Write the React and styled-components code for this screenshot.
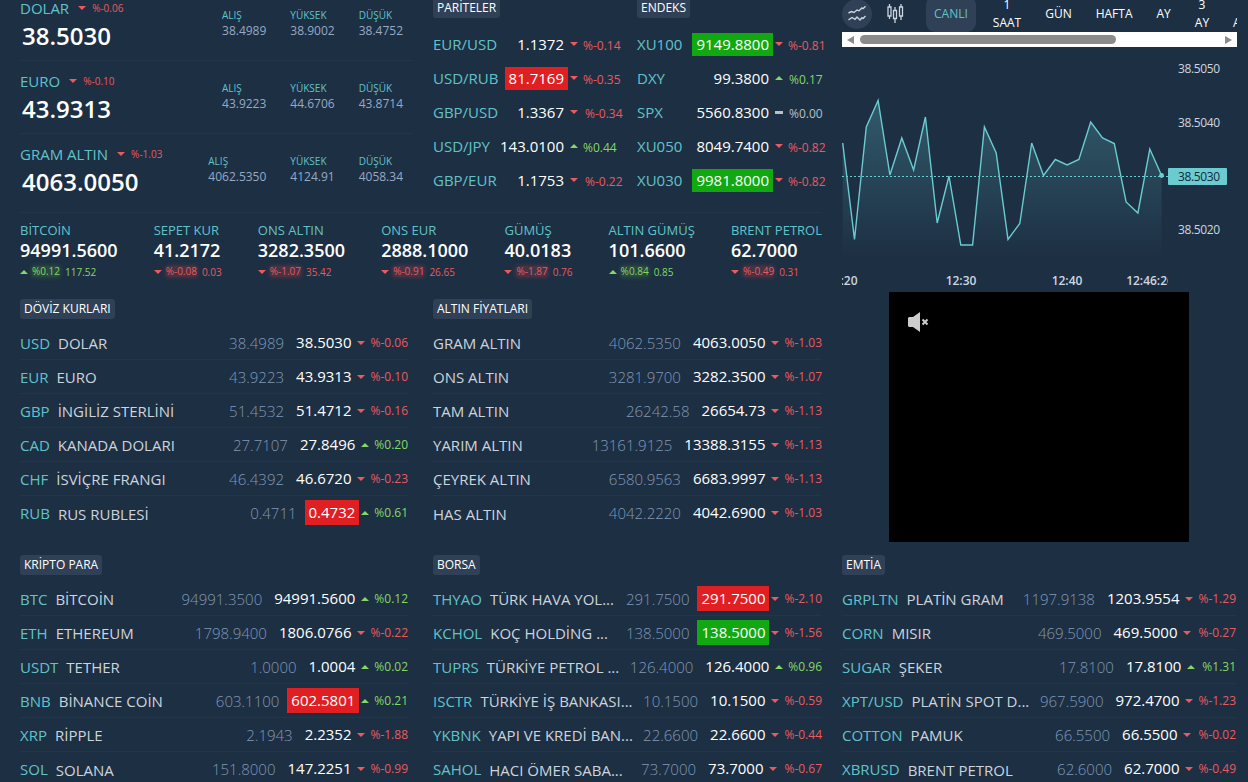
import React from 'react'
import styled, { ThemeProvider, createGlobalStyle } from 'styled-components'

const theme = {
  color: {
    bg: '#1d2f43',
    panel: '#2f4057',
    line: '#22354a',
    cyan: '#61c3ca',
    white: '#ffffff',
    name: '#cdd4dd',
    muted: '#8097b5',
    stat: '#97a9c4',
    up: '#85d863',
    down: '#ea5a5f',
    flat: '#b9c0c8',
    red: '#e01f23',
    green: '#12a812',
  },
}

const GlobalStyle = createGlobalStyle`
  * {
    box-sizing: border-box;
  }
  body {
    margin: 0;
    overflow: hidden;
    background: ${theme.color.bg};
    font-family: 'Open Sans', 'Noto Sans', sans-serif;
    color: ${theme.color.white};
  }
  button {
    border: 0;
    padding: 0;
    background: none;
    color: inherit;
    font: inherit;
  }
`

const StylePage = styled.div`
  display: grid;
  grid-template-columns: 802px 395px;
  column-gap: 20px;
  height: 782px;
  padding-left: 20px;
  overflow: hidden;
`

const StyleMain = styled.div`
  min-width: 0;
`

const StyleTop = styled.div`
  display: flex;
  height: 225px;
  margin-top: -12px;
  border-bottom: 1px solid ${({ theme }) => theme.color.line};
  .cards {
    flex-shrink: 0;
    width: 393px;
    margin-right: 20px;
  }
  .tables {
    display: flex;
    flex-shrink: 0;
    gap: 16px;
    padding-top: 10px;
  }
`

const StyleCard = styled.div`
  display: flex;
  justify-content: space-between;
  height: 73px;
  padding: 9px 10px 0 0;
  border-bottom: 1px solid ${({ theme, $last }) => ($last ? 'transparent' : theme.color.line)};
  .head {
    display: flex;
    align-items: center;
    height: 22px;
    font-size: 15px;
    color: ${({ theme }) => theme.color.cyan};
  }
  .price {
    padding-left: 2px;
    font-size: 24px;
    line-height: 34px;
    font-weight: 600;
  }
  .stats {
    display: flex;
    gap: 24px;
    padding-top: 11px;
    font-size: 12px;
    line-height: 15px;
    color: ${({ theme }) => theme.color.stat};
    b {
      display: block;
      font-size: 10px;
      line-height: 15px;
      font-weight: 400;
      color: ${({ theme }) => theme.color.cyan};
    }
  }
`

const Arrow = styled.i`
  flex-shrink: 0;
  width: ${({ $dir }) => ($dir === 'flat' ? '8px' : '0')};
  height: ${({ $dir }) => ($dir === 'flat' ? '3px' : '0')};
  margin-left: ${({ $gap = 0 }) => $gap}px;
  background: ${({ theme, $dir }) => ($dir === 'flat' ? theme.color.flat : 'none')};
  border-style: solid;
  border-color: transparent;
  border-width: ${({ $dir }) => ({ up: '0 4px 4px', down: '4px 4px 0', flat: '0' })[$dir]};
  border-bottom-color: ${({ theme, $dir }) => ($dir === 'up' ? theme.color.up : 'transparent')};
  border-top-color: ${({ theme, $dir }) => ($dir === 'down' ? theme.color.down : 'transparent')};
`

const Change = styled.span`
  flex-shrink: 0;
  font-size: ${({ $size = 12 }) => $size}px;
  color: ${({ theme, $dir }) => theme.color[$dir]};
  margin-left: ${({ $gap = 5 }) => $gap}px;
`

const Badge = styled.h2`
  display: inline-block;
  height: 20px;
  margin: 0;
  padding: 0 4px;
  border-radius: 3px;
  background: ${({ theme }) => theme.color.panel};
  font-size: 12px;
  line-height: 20px;
  font-weight: 400;
  vertical-align: top;
`

const StyleQuotes = styled.section`
  width: ${({ $width }) => $width}px;
  .list {
    padding-top: 7px;
  }
`

const StyleQuote = styled.div`
  display: flex;
  align-items: center;
  height: 34px;
  font-size: 15px;
  .code {
    flex-grow: 1;
    color: ${({ theme }) => theme.color.cyan};
  }
  .change {
    flex-shrink: 0;
    width: 43px;
    white-space: nowrap;
  }
`

const Price = styled.span`
  flex-shrink: 0;
  height: ${({ $tall }) => ($tall ? 25 : 23)}px;
  padding: 0 4px;
  margin-right: 2px;
  line-height: ${({ $tall }) => ($tall ? 24 : 22)}px;
  font-weight: 500;
  background: ${({ theme, $flash }) => ($flash ? theme.color[$flash] : 'transparent')};
`

const StyleStrip = styled.div`
  display: flex;
  justify-content: space-between;
  height: 86px;
  padding-top: 7px;
  .label {
    font-size: 13px;
    line-height: 20px;
    color: ${({ theme }) => theme.color.cyan};
  }
  .value {
    font-size: 18px;
    line-height: 20px;
    font-weight: 600;
  }
  .diff {
    display: flex;
    align-items: center;
    height: 23px;
  }
`

const Glow = styled(Change)`
  line-height: 11px;
  border-radius: 3px;
  background: ${({ $dir }) => ($dir === 'up' ? 'rgba(110, 200, 60, 0.16)' : 'rgba(234, 70, 75, 0.2)')};
  box-shadow: 0 0 4px 1px ${({ $dir }) => ($dir === 'up' ? 'rgba(110, 200, 60, 0.16)' : 'rgba(234, 70, 75, 0.2)')};
`

const StyleColumns = styled.div`
  display: flex;
  gap: 25px;
  height: 256px;
`

const StyleTable = styled.section`
  width: ${({ $width }) => $width}px;
  .list {
    padding-top: 5px;
  }
`

const StyleRow = styled.div`
  display: flex;
  align-items: center;
  height: 34px;
  border-bottom: 1px solid ${({ theme, $last }) => ($last ? 'transparent' : theme.color.line)};
  font-size: 15px;
  white-space: nowrap;
  .code {
    margin-right: 8px;
    color: ${({ theme }) => theme.color.cyan};
  }
  .name {
    flex-grow: 1;
    padding-top: ${({ $last }) => ($last ? 2 : 0)}px;
    color: ${({ theme }) => theme.color.name};
  }
  .prev {
    margin-right: 8px;
    font-weight: 300;
    color: ${({ theme }) => theme.color.muted};
  }
`

const StyleSide = styled.aside`
  display: flex;
  flex-direction: column;
`

const StyleToolbar = styled.div`
  display: flex;
  align-items: center;
  gap: 8px;
  height: 36px;
  margin-top: -4px;
  overflow: hidden;
`

const IconButton = styled.button`
  flex-shrink: 0;
  width: 30px;
  height: 30px;
  border-radius: 50%;
  background: ${({ theme, $active }) => ($active ? theme.color.panel : 'transparent')};
  svg {
    display: block;
    margin: 5px;
  }
`

const RangeButton = styled.button`
  flex-shrink: 0;
  height: 36px;
  padding: 0 8px;
  margin: ${({ $active }) => ($active ? '0 1px 0 8px' : 0)};
  border-radius: 9px;
  background: ${({ theme, $active }) => ($active ? theme.color.panel : 'transparent')};
  color: ${({ theme, $active }) => ($active ? theme.color.cyan : theme.color.white)};
  font-size: 12px;
  line-height: 18px;
  white-space: pre-line;
`

const StyleScrollbar = styled.div`
  display: flex;
  align-items: center;
  height: 15px;
  padding: 0 5px;
  background: #fff;
  i {
    border: solid transparent;
    border-width: 4.5px 7px 4.5px 0;
    border-right-color: #8b8b8b;
    &:last-child {
      border-width: 4.5px 0 4.5px 7px;
      border-left-color: #8b8b8b;
      margin-left: auto;
    }
  }
  span {
    width: 256px;
    height: 9px;
    margin-left: 6px;
    border-radius: 5px;
    background: #8b8b8b;
  }
`

const StyleChart = styled.div`
  display: grid;
  grid-template-columns: 326px 69px;
  height: 245px;
  font-size: 12px;
  font-weight: 600;
  color: #ced6e0;
  svg {
    display: block;
  }
`

const Video = styled.div`
  width: 300px;
  height: 250px;
  margin: 0 auto 13px 47px;
  padding: 20px 19px;
  background: #000;
  svg {
    display: block;
  }
`

// [label, dir, change, price, alis, yuksek, dusuk]
const cards = [
  ['DOLAR', 'down', '%-0.06', '38.5030', '38.4989', '38.9002', '38.4752'],
  ['EURO', 'down', '%-0.10', '43.9313', '43.9223', '44.6706', '43.8714'],
  ['GRAM ALTIN', 'down', '%-1.03', '4063.0050', '4062.5350', '4124.91', '4058.34'],
]

const parities = [
  { code: 'EUR/USD', price: '1.1372', change: '%-0.14' },
  { code: 'USD/RUB', price: '81.7169', change: '%-0.35', flash: 'red' },
  { code: 'GBP/USD', price: '1.3367', change: '%-0.34', gap: 7 },
  { code: 'USD/JPY', price: '143.0100', change: '%0.44', dir: 'up' },
  { code: 'GBP/EUR', price: '1.1753', change: '%-0.22', gap: 7 },
]

const indexes = [
  { code: 'XU100', price: '9149.8800', change: '%-0.81', flash: 'green' },
  { code: 'DXY', price: '99.3800', change: '%0.17', dir: 'up', gap: 6 },
  { code: 'SPX', price: '5560.8300', change: '%0.00', dir: 'flat', gap: 6 },
  { code: 'XU050', price: '8049.7400', change: '%-0.82' },
  { code: 'XU030', price: '9981.8000', change: '%-0.82', flash: 'green' },
]

const strip = [
  ['BİTCOİN', '94991.5600', 'up', '%0.12', '117.52'],
  ['SEPET KUR', '41.2172', 'down', '%-0.08', '0.03'],
  ['ONS ALTIN', '3282.3500', 'down', '%-1.07', '35.42'],
  ['ONS EUR', '2888.1000', 'down', '%-0.91', '26.65'],
  ['GÜMÜŞ', '40.0183', 'down', '%-1.87', '0.76'],
  ['ALTIN GÜMÜŞ', '101.6600', 'up', '%0.84', '0.85'],
  ['BRENT PETROL', '62.7000', 'down', '%-0.49', '0.31'],
]

const currencies = [
  { code: 'USD', name: 'DOLAR', prev: '38.4989', price: '38.5030', change: '%-0.06' },
  { code: 'EUR', name: 'EURO', prev: '43.9223', price: '43.9313', change: '%-0.10' },
  { code: 'GBP', name: 'İNGİLİZ STERLİNİ', prev: '51.4532', price: '51.4712', change: '%-0.16' },
  { code: 'CAD', name: 'KANADA DOLARI', prev: '27.7107', price: '27.8496', change: '%0.20', dir: 'up' },
  { code: 'CHF', name: 'İSVİÇRE FRANGI', prev: '46.4392', price: '46.6720', change: '%-0.23' },
  { code: 'RUB', name: 'RUS RUBLESİ', prev: '0.4711', price: '0.4732', change: '%0.61', dir: 'up', flash: 'red' },
]

const golds = [
  { name: 'GRAM ALTIN', prev: '4062.5350', price: '4063.0050', change: '%-1.03' },
  { name: 'ONS ALTIN', prev: '3281.9700', price: '3282.3500', change: '%-1.07' },
  { name: 'TAM ALTIN', prev: '26242.58', price: '26654.73', change: '%-1.13' },
  { name: 'YARIM ALTIN', prev: '13161.9125', price: '13388.3155', change: '%-1.13' },
  { name: 'ÇEYREK ALTIN', prev: '6580.9563', price: '6683.9997', change: '%-1.13' },
  { name: 'HAS ALTIN', prev: '4042.2220', price: '4042.6900', change: '%-1.03' },
]

const cryptos = [
  { code: 'BTC', name: 'BİTCOİN', prev: '94991.3500', price: '94991.5600', change: '%0.12', dir: 'up' },
  { code: 'ETH', name: 'ETHEREUM', prev: '1798.9400', price: '1806.0766', change: '%-0.22' },
  { code: 'USDT', name: 'TETHER', prev: '1.0000', price: '1.0004', change: '%0.02', dir: 'up' },
  { code: 'BNB', name: 'BİNANCE COİN', prev: '603.1100', price: '602.5801', change: '%0.21', dir: 'up', flash: 'red' },
  { code: 'XRP', name: 'RİPPLE', prev: '2.1943', price: '2.2352', change: '%-1.88' },
  { code: 'SOL', name: 'SOLANA', prev: '151.8000', price: '147.2251', change: '%-0.99' },
]

const stocks = [
  { code: 'THYAO', name: 'TÜRK HAVA YOL...', prev: '291.7500', price: '291.7500', change: '%-2.10', flash: 'red' },
  { code: 'KCHOL', name: 'KOÇ HOLDİNG ...', prev: '138.5000', price: '138.5000', change: '%-1.56', flash: 'green' },
  { code: 'TUPRS', name: 'TÜRKİYE PETROL ...', prev: '126.4000', price: '126.4000', change: '%0.96', dir: 'up' },
  { code: 'ISCTR', name: 'TÜRKİYE İŞ BANKASI...', prev: '10.1500', price: '10.1500', change: '%-0.59' },
  { code: 'YKBNK', name: 'YAPI VE KREDİ BAN...', prev: '22.6600', price: '22.6600', change: '%-0.44' },
  { code: 'SAHOL', name: 'HACI ÖMER SABA...', prev: '73.7000', price: '73.7000', change: '%-0.67', gap: 7 },
]

const commodities = [
  { code: 'GRPLTN', name: 'PLATİN GRAM', prev: '1197.9138', price: '1203.9554', change: '%-1.29' },
  { code: 'CORN', name: 'MISIR', prev: '469.5000', price: '469.5000', change: '%-0.27', gap: 7 },
  { code: 'SUGAR', name: 'ŞEKER', prev: '17.8100', price: '17.8100', change: '%1.31', dir: 'up', gap: 7 },
  { code: 'XPT/USD', name: 'PLATİN SPOT D...', prev: '967.5900', price: '972.4700', change: '%-1.23' },
  { code: 'COTTON', name: 'PAMUK', prev: '66.5500', price: '66.5500', change: '%-0.02', gap: 7 },
  { code: 'XBRUSD', name: 'BRENT PETROL', prev: '62.6000', price: '62.7000', change: '%-0.49' },
]

const ranges = ['CANLI', '1\nSAAT', 'GÜN', 'HAFTA', 'AY', '3\nAY', '6\nAY']

// y of every tick, the ticks are 11.8px apart
const ticks = [
  96, 192.5, 80, 53.5, 128, 91, 123, 70, 176, 129, 198, 198, 80, 106, 192.5, 176.5, 96, 128.5, 112.5, 118, 112.5, 75, 91,
  96.5, 155, 166, 102, 128.5,
]
const line = ticks.map((y, i) => `${(0.7 + i * 11.81).toFixed(1)},${y}`).join(' ')

const Quotes = ({ title, rows, width }) => (
  <StyleQuotes $width={width}>
    <Badge>{title}</Badge>
    <div className='list'>
      {rows.map(({ code, price, change, dir = 'down', flash, gap }) => (
        <StyleQuote key={code}>
          <span className='code'>{code}</span>
          <Price $flash={flash}>{price}</Price>
          <Arrow $dir={dir} />
          <span className='change'>
            <Change $dir={dir} $gap={gap}>
              {change}
            </Change>
          </span>
        </StyleQuote>
      ))}
    </div>
  </StyleQuotes>
)

const Table = ({ title, rows, width }) => (
  <StyleTable $width={width}>
    <Badge>{title}</Badge>
    <div className='list'>
      {rows.map(({ code, name, prev, price, change, dir = 'down', flash, gap }, i) => (
        <StyleRow key={name} $last={i === rows.length - 1}>
          {code ? <span className='code'>{code}</span> : null}
          <span className='name'>{name}</span>
          <span className='prev'>{prev}</span>
          <Price $flash={flash} $tall>
            {price}
          </Price>
          <Arrow $dir={dir} />
          <Change $dir={dir} $gap={gap}>
            {change}
          </Change>
        </StyleRow>
      ))}
    </div>
  </StyleTable>
)

const Chart = () => (
  <StyleChart>
    <svg width='326' height='245'>
      <defs>
        <linearGradient id='area' x1='0' y1='50' x2='0' y2='211' gradientUnits='userSpaceOnUse'>
          <stop offset='0' stopColor='#61c3ca' stopOpacity='0.3' />
          <stop offset='1' stopColor='#61c3ca' stopOpacity='0' />
        </linearGradient>
      </defs>
      <polygon points={`0.7,211 ${line} 319.6,211`} fill='url(#area)' />
      <polyline points={line} fill='none' stroke='#6accd0' strokeWidth='1.4' />
      <line x1='0' x2='326' y1='129.5' y2='129.5' stroke='#6accd0' strokeDasharray='2 2' />
      <circle cx='319.6' cy='128.5' r='2.4' fill='#6accd0' />
      <g fill='#ced6e0' textAnchor='middle'>
        <text x='7' y='238'>:20</text>
        <text x='119' y='238'>12:30</text>
        <text x='225' y='238'>12:40</text>
        <text x='308' y='238'>12:46:26</text>
      </g>
    </svg>
    <svg width='69' height='245'>
      <rect x='0' y='121' width='59' height='17' rx='1' fill='#6accd0' />
      <g fill='#ced6e0' fontWeight='500'>
        <text x='10' y='26' textLength='42'>38.5050</text>
        <text x='10' y='80' textLength='42'>38.5040</text>
        <text x='10' y='134' textLength='42' fill='#14283a'>38.5030</text>
        <text x='10' y='187' textLength='42'>38.5020</text>
      </g>
    </svg>
  </StyleChart>
)

const App = () => (
  <ThemeProvider theme={theme}>
    <GlobalStyle />
    <StylePage>
      <StyleMain>
        <StyleTop>
          <div className='cards'>
            {cards.map(([label, dir, change, price, buy, high, low], i) => (
              <StyleCard key={label} $last={i === 2}>
                <div>
                  <div className='head'>
                    <span>{label}</span>
                    <Arrow $dir={dir} $gap={9} />
                    <Change $dir={dir} $size={10} $gap={6}>
                      {change}
                    </Change>
                  </div>
                  <div className='price'>{price}</div>
                </div>
                <div className='stats'>
                  <span>
                    <b>ALIŞ</b>
                    {buy}
                  </span>
                  <span>
                    <b>YÜKSEK</b>
                    {high}
                  </span>
                  <span>
                    <b>DÜŞÜK</b>
                    {low}
                  </span>
                </div>
              </StyleCard>
            ))}
          </div>
          <div className='tables'>
            <Quotes title='PARİTELER' rows={parities} width={188} />
            <Quotes title='ENDEKS' rows={indexes} width={189} />
          </div>
        </StyleTop>
        <StyleStrip>
          {strip.map(([label, value, dir, change, diff]) => (
            <div key={label}>
              <div className='label'>{label}</div>
              <div className='value'>{value}</div>
              <div className='diff'>
                <Arrow $dir={dir} />
                <Glow $dir={dir} $size={10} $gap={4}>
                  {change}
                </Glow>
                <Change $dir={dir} $size={10} $gap={5}>
                  {diff}
                </Change>
              </div>
            </div>
          ))}
        </StyleStrip>
        <StyleColumns>
          <Table title='DÖVİZ KURLARI' rows={currencies} width={388} />
          <Table title='ALTIN FİYATLARI' rows={golds} width={389} />
        </StyleColumns>
        <StyleColumns>
          <Table title='KRİPTO PARA' rows={cryptos} width={388} />
          <Table title='BORSA' rows={stocks} width={389} />
        </StyleColumns>
      </StyleMain>
      <StyleSide>
        <StyleToolbar>
          <IconButton $active>
            <svg width='20' height='20' fill='none' stroke='#cbd5e0' strokeWidth='1.4'>
              <path d='M1.5 9l3-1.5 2.5 1 3-2.5 2 .8 3-2.8 1 .7 2.5-2.5M1.5 15.8l3.5-2.3 3 1.8 2-2.3 3 3 2-2.3 1 .8 2.5-2.5' />
            </svg>
          </IconButton>
          <IconButton>
            <svg width='20' height='20' fill='none' stroke='#cbd5e0' strokeWidth='1.3'>
              <path d='M4.5 0v3M4.5 12v3M10 3v3.5M10 14.5V19M16 0v3M16 12v4M3 3h3v9H3zM8.5 6.5h3v8h-3zM14.5 3h3v9h-3z' />
            </svg>
          </IconButton>
          {ranges.map((range, i) => (
            <RangeButton key={range} $active={i === 0}>
              {range}
            </RangeButton>
          ))}
        </StyleToolbar>
        <StyleScrollbar>
          <i />
          <span />
          <i />
        </StyleScrollbar>
        <Chart />
        <Video>
          <svg width='22' height='20' fill='#ccc'>
            <path d='M0 6l1-1h4l7-5v20l-7-5H1l-1-1z' />
            <path d='M14.5 7.5l5 5M19.5 7.5l-5 5' stroke='#ccc' strokeWidth='2' />
          </svg>
        </Video>
        <Table title='EMTİA' rows={commodities} width={394} />
      </StyleSide>
    </StylePage>
  </ThemeProvider>
)

export default App
